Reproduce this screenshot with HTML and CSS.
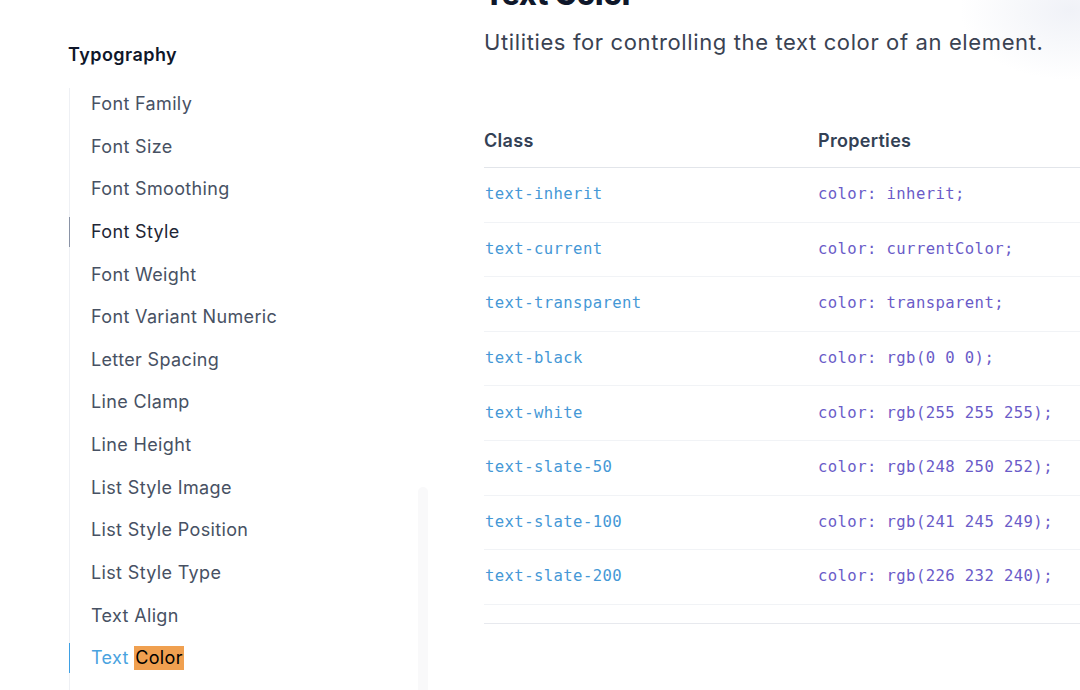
FILE: index.html
```html
<!DOCTYPE html>
<html lang="en">
<head>
<meta charset="utf-8">
<title>Text Color</title>
<link rel="stylesheet" href="styles.css">
</head>
<body>
<div class="page">
  <aside class="sidebar">
    <h5 class="nav-heading">Typography</h5>
    <ul class="nav-list">
      <li class="nav-item">Font Family</li>
      <li class="nav-item">Font Size</li>
      <li class="nav-item">Font Smoothing</li>
      <li class="nav-item hover">Font Style</li>
      <li class="nav-item">Font Weight</li>
      <li class="nav-item">Font Variant Numeric</li>
      <li class="nav-item">Letter Spacing</li>
      <li class="nav-item">Line Clamp</li>
      <li class="nav-item">Line Height</li>
      <li class="nav-item">List Style Image</li>
      <li class="nav-item">List Style Position</li>
      <li class="nav-item">List Style Type</li>
      <li class="nav-item">Text Align</li>
      <li class="nav-item active">Text <mark class="hl">Color</mark></li>
    </ul>
    <div class="scroll-track"></div>
  </aside>
  <main class="content">
    <h1 class="title">Text Color</h1>
    <p class="lead">Utilities for controlling the text color of an element.</p>
    <div class="table-wrap">
      <table class="ref-table">
        <thead>
          <tr><th class="col-class">Class</th><th>Properties</th></tr>
        </thead>
        <tbody>
          <tr><td class="cls">text-inherit</td><td class="prop">color: inherit;</td></tr>
          <tr><td class="cls">text-current</td><td class="prop">color: currentColor;</td></tr>
          <tr><td class="cls">text-transparent</td><td class="prop">color: transparent;</td></tr>
          <tr><td class="cls">text-black</td><td class="prop">color: rgb(0 0 0);</td></tr>
          <tr><td class="cls">text-white</td><td class="prop">color: rgb(255 255 255);</td></tr>
          <tr><td class="cls">text-slate-50</td><td class="prop">color: rgb(248 250 252);</td></tr>
          <tr><td class="cls">text-slate-100</td><td class="prop">color: rgb(241 245 249);</td></tr>
          <tr><td class="cls">text-slate-200</td><td class="prop">color: rgb(226 232 240);</td></tr>
        </tbody>
      </table>
    </div>
  </main>
</div>
</body>
</html>
```

FILE: styles.css
```css
html, body {
  margin: 0;
  padding: 0;
}

body {
  width: 1080px;
  height: 690px;
  overflow: hidden;
  font-family: Inter, "Noto Sans", sans-serif;
  background:
    radial-gradient(ellipse 110px 70px at 1070px 10px, rgba(230, 233, 242, 0.6), rgba(255, 255, 255, 0) 100%),
    #ffffff;
}

.page {
  display: flex;
  height: 690px;
}

.sidebar {
  position: relative;
  width: 415px;
  padding-left: 69px;
  flex-shrink: 0;
}

.nav-heading {
  margin: 43px 0 0;
  font-size: 18px;
  line-height: 24px;
  font-weight: 600;
  color: #0f172a;
  letter-spacing: 0.45px;
  margin-left: -1px;
}

.nav-list {
  list-style: none;
  margin: 21px 0 0;
  padding: 1px 0 20px;
  border-left: 1px solid #eef0f4;
  display: flex;
  flex-direction: column;
  gap: 12.65px;
}

.nav-item {
  margin-left: -1px;
  padding: 1px 0 1px 21px;
  border-left: 1px solid transparent;
  font-size: 18px;
  line-height: 28px;
  color: #475163;
  letter-spacing: 0.35px;
}

.nav-item.hover {
  border-left-color: #8a93a6;
  color: #1e2636;
}

.nav-item.active {
  border-left: 1px solid #3ea0e4;
  color: #4aa3df;
}

.hl {
  background: #f0a050;
  color: #000000;
  padding: 1px 1px 2px;
}

.scroll-track {
  position: absolute;
  left: 418px;
  top: 487px;
  width: 10px;
  height: 210px;
  border-radius: 5px 5px 0 0;
  background: #f9f9fa;
}

.content {
  flex: 1;
}

.title {
  margin: -24px 0 0;
  font-size: 30px;
  line-height: 36px;
  font-weight: 800;
  color: #0f172a;
  letter-spacing: -0.2px;
}

.lead {
  margin: 14px 0 0;
  font-size: 22px;
  line-height: 32px;
  color: #3a4252;
  letter-spacing: 0.62px;
}

.table-wrap {
  margin-top: 70px;
  height: 495px;
  overflow: hidden;
  border-bottom: 1px solid #e7e9ee;
}

.ref-table {
  width: 640px;
  border-collapse: collapse;
}

.ref-table th {
  text-align: left;
  font-size: 18px;
  line-height: 24px;
  font-weight: 600;
  color: #334155;
  padding: 1px 0 14px 0;
  border-bottom: 1px solid #e2e5ea;
  letter-spacing: 0.3px;
}

.col-class {
  width: 334px;
}

.ref-table td {
  height: 52.6px;
  padding: 0 0 1px;
  border-bottom: 1px solid #f1f3f6;
  font-family: "DejaVu Sans Mono", "Liberation Mono", monospace;
  font-size: 15.6px;
  letter-spacing: 0.4px;
  vertical-align: middle;
}

.cls {
  color: #4598d6;
  padding-left: 1px !important;
}

.prop {
  color: #6a5bc8;
}
```
